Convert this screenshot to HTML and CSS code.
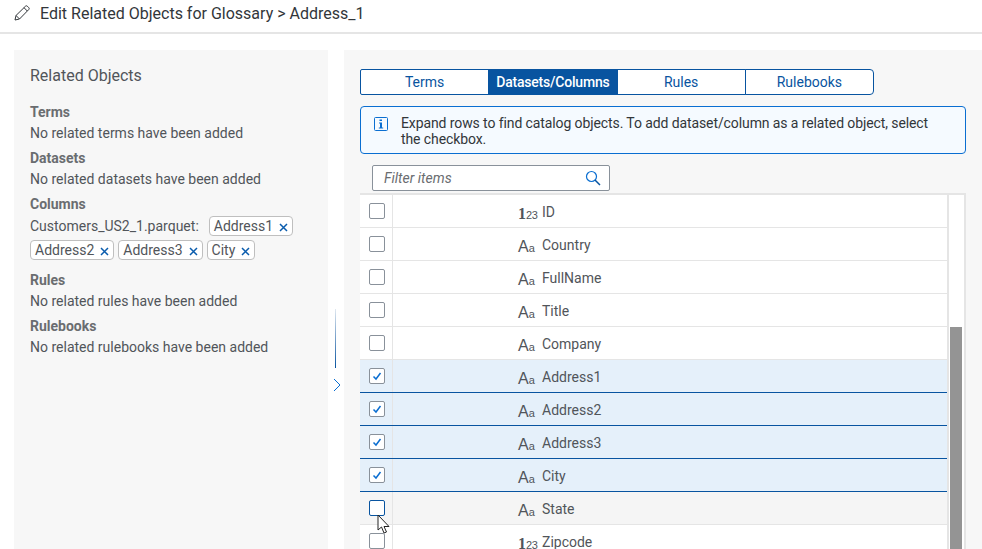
FILE: index.html
```html
<!DOCTYPE html>
<html lang="en">
<head>
    <meta charset="UTF-8">
    <meta name="viewport" content="width=device-width, initial-scale=1.0">
    <title>Edit Related Objects</title>
    <link rel="stylesheet" href="styles.css">
</head>
<body>

    <!-- Page header -->
    <header class="page-header">
        <svg class="edit-icon" width="16" height="16" viewBox="0 0 16 16">
            <path d="M1 15l1-4.500L11.500 1.200a1.300 1.300 0 0 1 1.800 0l1.500 1.500a1.300 1.300 0 0 1 0 1.800L5.500 14z M2 10.500L5.500 14 M10 2.700l3.300 3.300" fill="none" stroke="#32363a" stroke-width="1"/>
        </svg>
        <span>Edit Related Objects for Glossary &gt; Address_1</span>
    </header>

    <main class="content">

        <!-- Left summary panel -->
        <section class="summary">
            <h2>Related Objects</h2>
            <h3>Terms</h3>
            <p>No related terms have been added</p>
            <h3>Datasets</h3>
            <p>No related datasets have been added</p>
            <h3>Columns</h3>
            <div class="tokens">
                <span class="token-label">Customers_US2_1.parquet:</span>
                <span class="token">Address1 <svg class="token-x" width="9" height="9" viewBox="0 0 9 9"><path d="M1 1l7 7M8 1l-7 7"/></svg></span>
                <span class="token">Address2 <svg class="token-x" width="9" height="9" viewBox="0 0 9 9"><path d="M1 1l7 7M8 1l-7 7"/></svg></span>
                <span class="token">Address3 <svg class="token-x" width="9" height="9" viewBox="0 0 9 9"><path d="M1 1l7 7M8 1l-7 7"/></svg></span>
                <span class="token">City <svg class="token-x" width="9" height="9" viewBox="0 0 9 9"><path d="M1 1l7 7M8 1l-7 7"/></svg></span>
            </div>
            <h3>Rules</h3>
            <p>No related rules have been added</p>
            <h3>Rulebooks</h3>
            <p>No related rulebooks have been added</p>
        </section>

        <!-- Splitter -->
        <div class="splitter">
            <div class="splitter-line"></div>
            <svg class="splitter-arrow" width="8" height="14" viewBox="0 0 8 14">
                <path d="M1 1l6 6-6 6" fill="none" stroke="#0a6ed1" stroke-width="1"/>
            </svg>
        </div>

        <!-- Right picker panel -->
        <section class="picker">
            <div class="tabs">
                <button class="tab">Terms</button>
                <button class="tab tab-active">Datasets/Columns</button>
                <button class="tab">Rules</button>
                <button class="tab">Rulebooks</button>
            </div>

            <div class="info-strip">
                <svg class="info-icon" width="14" height="14" viewBox="0 0 14 14">
                    <rect x="0.500" y="0.500" width="13" height="13" rx="1" fill="none" stroke="#0a6ed1"/>
                    <path d="M5.500 2.500h2.500v1.500h-2.500z M5 5.500h3v5h1.200v1H4.800v-1H6V6.500H5z" fill="#0a6ed1"/>
                </svg>
                <span>Expand rows to find catalog objects. To add dataset/column as a related object, select the checkbox.</span>
            </div>

            <div class="filter">
                <span class="filter-text">Filter items</span>
                <svg width="16" height="16" viewBox="0 0 16 16">
                    <circle cx="6.500" cy="6.500" r="5" fill="none" stroke="#0a6ed1" stroke-width="1.200"/>
                    <path d="M10 10l5 5" stroke="#0854a0" stroke-width="1.500"/>
                </svg>
            </div>

            <div class="table-wrap">
                <div class="rows" id="rows"></div>
                <div class="scroll-col"><div class="scroll-thumb"></div></div>
            </div>
        </section>
    </main>

    <!-- Mouse pointer -->
    <svg class="pointer" width="14" height="22" viewBox="0 0 14 22">
        <path d="M1 1v15l3.500-3 2.500 6 2.500-1-2.500-5.500h5z" fill="#fff" stroke="#222" stroke-width="1"/>
    </svg>

    <script src="rows.js"></script>
</body>
</html>
```

FILE: rows.js
```js
// Column rows of the dataset table
var columns = [
    { name: "ID", type: "num" },
    { name: "Country", type: "str" },
    { name: "FullName", type: "str" },
    { name: "Title", type: "str" },
    { name: "Company", type: "str" },
    { name: "Address1", type: "str", selected: true },
    { name: "Address2", type: "str", selected: true },
    { name: "Address3", type: "str", selected: true },
    { name: "City", type: "str", selected: true },
    { name: "State", type: "str", hover: true },
    { name: "Zipcode", type: "num" }
];

var tick = '<svg width="12" height="12" viewBox="0 0 12 12"><path d="M2.500 6.500l2.500 2.500 4.500-6" fill="none" stroke="#0a6ed1" stroke-width="1.500"/></svg>';

document.getElementById("rows").innerHTML = columns.map(function(col) {
    var cls = "row" + (col.selected ? " row-selected" : "") + (col.hover ? " row-hover" : "");
    var icon = col.type === "num"
        ? '<span class="type-icon type-num">1<small>23</small></span>'
        : '<span class="type-icon type-str">A<small>a</small></span>';
    return '<div class="' + cls + '">' +
        '<div class="check-cell"><span class="check">' + (col.selected ? tick : "") + '</span></div>' +
        '<div class="name-cell">' + icon + '<span>' + col.name + '</span></div>' +
        '</div>';
}).join("");
```

FILE: styles.css
```css
/* Global Reset */
* {
    margin: 0;
    padding: 0;
    box-sizing: border-box;
}

body {
    font-family: 'Roboto', Arial, sans-serif;
    font-size: 14px;
    background-color: #fff;
    color: #32363a;
    height: 549px;
    overflow: hidden;
    position: relative;
}

/* Page header */
.page-header {
    height: 34px;
    border-bottom: 2px solid #e5e5e5;
    display: flex;
    align-items: center;
    gap: 10px;
    padding: 0 0 6px 14px;
    font-size: 16px;
}

/* Layout */
.content {
    display: flex;
    padding: 16px 0 0 14px;
    height: 515px;
}

/* Left panel */
.summary {
    width: 314px;
    background-color: #f7f7f7;
    padding: 16px 16px;
    color: #51555a;
}

.summary h2 {
    font-size: 16px;
    font-weight: 400;
    line-height: 20px;
    margin-bottom: 16px;
}

.summary h3 {
    font-size: 14px;
    font-weight: 700;
    color: #6a6d70;
    line-height: 20px;
    margin-top: 5px;
    margin-bottom: 1px;
}

.summary h2 + h3 {
    margin-top: 0;
}

.summary p {
    line-height: 20px;
}

.tokens {
    display: flex;
    flex-wrap: wrap;
    gap: 4px;
    align-items: center;
    margin-top: 2px;
    margin-bottom: 10px;
}

.token-label {
    margin-right: 6px;
}

.token {
    border: 1px solid #bfbfbf;
    border-radius: 4px;
    background-color: #fff;
    height: 20px;
    line-height: 18px;
    padding: 0 4px;
    display: inline-flex;
    align-items: center;
    gap: 6px;
}

.token-x {
    fill: none;
    stroke: #0a5cad;
    stroke-width: 1.500;
    margin-top: 2px;
}

/* Splitter */
.splitter {
    width: 16px;
    position: relative;
}

.splitter-line {
    position: absolute;
    left: 7px;
    top: 259px;
    height: 59px;
    width: 1px;
    background: linear-gradient(#e0e8f0, #0854a0);
}

.splitter-arrow {
    position: absolute;
    left: 5px;
    top: 328px;
}

/* Right panel */
.picker {
    flex: 1;
    background-color: #f7f7f7;
    padding: 19px 16px 0;
    overflow: hidden;
}

.tabs {
    display: flex;
    width: 514px;
    height: 26px;
}

.tab {
    flex: 1;
    font: inherit;
    color: #0854a0;
    background-color: #fff;
    border: 1px solid #0854a0;
    margin-left: -1px;
}

.tab:first-child {
    margin-left: 0;
    border-radius: 2px 0 0 2px;
}

.tab:last-child {
    border-radius: 0 4px 4px 0;
}

.tab-active {
    background-color: #0854a0;
    color: #fff;
    font-weight: 500;
    letter-spacing: -0.2px;
}

.info-strip {
    margin-top: 11px;
    width: 606px;
    height: 48px;
    border: 1px solid #0a6ed1;
    border-radius: 4px;
    background-color: #f5faff;
    padding: 8px 16px 0 13px;
    display: flex;
    gap: 13px;
    line-height: 16px;
    letter-spacing: -0.1px;
}

.info-icon {
    flex: none;
    margin-top: 2px;
}

.filter {
    margin: 11px 0 2px 12px;
    width: 238px;
    height: 26px;
    border: 1px solid #89919a;
    border-radius: 2px;
    background-color: #fff;
    display: flex;
    align-items: center;
    justify-content: space-between;
    padding: 0 8px 0 11px;
}

.filter-text {
    font-style: italic;
    color: #6a6d70;
}

/* Table */
.table-wrap {
    display: flex;
    width: 606px;
    height: 400px;
    border-top: 2px solid #e5e5e5;
    border-right: 2px solid #e5e5e5;
    overflow: hidden;
    background-color: #fff;
}

.rows {
    flex: 1;
    border-right: 2px solid #e5e5e5;
}

.row {
    display: flex;
    height: 33px;
    background-color: #fff;
    border-bottom: 1px solid #e5e5e5;
}

.row-selected {
    background-color: #e5f0fa;
    border-bottom: 1px solid #0854a0;
}

.row-hover {
    background-color: #f5f5f5;
}

.check-cell {
    width: 33px;
    flex: none;
    border-right: 1px solid #e5e5e5;
    padding-left: 9px;
    padding-top: 8px;
}

.check {
    display: flex;
    align-items: center;
    justify-content: center;
    width: 16px;
    height: 16px;
    border: 1px solid #89919a;
    border-radius: 2px;
    background-color: #fff;
}

.row-hover .check {
    border-color: #0854a0;
}

.name-cell {
    flex: 1;
    display: flex;
    align-items: center;
    padding: 2px 0 0 125px;
    gap: 7px;
    color: #51555a;
}

.type-icon {
    width: 17px;
    font-family: 'Liberation Sans', sans-serif;
    font-size: 16px;
    line-height: 1;
    color: #51555a;
    margin-top: 3px;
    white-space: nowrap;
}

.type-icon small {
    font-size: 11px;
}

.type-num {
    font-family: 'Liberation Serif', serif;
    font-weight: 700;
}

.type-num small {
    font-family: 'Liberation Sans', sans-serif;
    font-weight: 400;
    letter-spacing: -0.3px;
}

.scroll-col {
    width: 15px;
    flex: none;
    padding: 132px 2px 0 1px;
}

.scroll-thumb {
    height: 300px;
    background-color: #949494;
}

/* Mouse pointer */
.pointer {
    position: absolute;
    left: 377px;
    top: 514px;
}
```
